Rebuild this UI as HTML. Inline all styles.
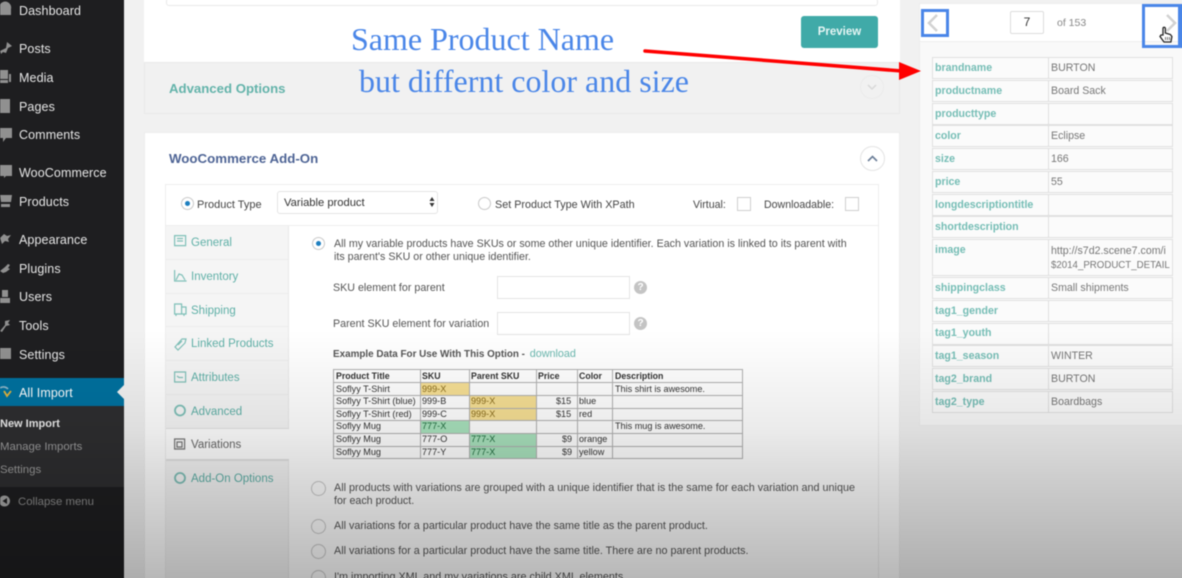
<!DOCTYPE html>
<html style="overflow:hidden"><head><meta charset="utf-8">
<style>
html,body{margin:0;padding:0;width:1182px;height:578px;overflow:hidden;background:#f1f1f1}
#o{position:relative;width:1182px;height:578px;overflow:hidden}
#p{position:relative;width:1182px;height:578px;font-family:"Liberation Sans",sans-serif;color:#555;filter:blur(.4px)}
.a,.t{position:absolute}
.t{white-space:nowrap;line-height:16px;height:16px}
.m{left:19px;color:#e6e6e6;font-size:12.5px;font-weight:400;letter-spacing:.1px}
.tab{left:191px;color:#5fb0a7;font-size:11.5px}
.tl{position:absolute;left:166px;width:122px;height:1px;background:#ececec}
.g{color:#555;font-size:10.7px}
.rr{position:absolute;left:932px;width:241px;background:#fbfbfb;border:1px solid #e0e0e0;box-sizing:border-box}
.rr:after{content:"";position:absolute;left:115px;top:0;bottom:0;width:1px;background:#e0e0e0}
.k{left:935px;color:#75bdb5;font-size:10.6px;font-weight:700}
.v{left:1051px;color:#777;font-size:10.6px}
.radio{position:absolute;width:13px;height:13px;border:1px solid #c9c9c9;border-radius:50%;background:#fff;box-sizing:border-box}
.radio.on:after{content:"";position:absolute;left:3px;top:3px;width:5px;height:5px;border-radius:50%;background:#1e7fc0}
.inp{position:absolute;left:497px;width:133px;height:23px;background:#fff;border:1px solid #e4e4e4;box-sizing:border-box}
.q{position:absolute;left:634px;width:13px;height:13px;border-radius:50%;background:#c4c4c4;color:#fff;font-size:10px;font-weight:700;text-align:center;line-height:13px}
.chk{position:absolute;top:197px;width:14px;height:14px;background:#fff;border:1px solid #cfcfcf;box-sizing:border-box}
.x{font-size:9.1px;color:#333;line-height:12px;height:12px}
.b{font-weight:700;font-size:8.8px}
</style></head><body><div id="o"><div id="p">

<div class="a" style="left:-6px;top:-6px;width:1194px;height:590px;background:#f1f1f1"></div>

<!-- sidebar -->
<div class="a" style="left:-6px;top:-6px;width:130px;height:590px;background:#1e1e20"></div>
<div class="a" style="left:-6px;top:378px;width:130px;height:28px;background:#00719f"></div>
<div class="a" style="left:-6px;top:406px;width:130px;height:81px;background:#2e2e30"></div>
<div class="a" style="left:117px;top:385px;width:0;height:0;border:7px solid transparent;border-left:0;border-right:7px solid #f1f1f1"></div>

<svg class="a" style="left:0;top:0" width="18" height="370" viewBox="0 0 18 370" fill="#909090">
<path d="M0 4.500a6 6 0 0 1 11 4.500v6H0z"/>
<path d="M0 51l6-3 1-6 5 4-4 2-2 5-3-1-2 2z"/>
<path d="M0 70h8v9H0zM9 74h2v8H9zM0 80h8v3H0z"/>
<path d="M0 99h10v14H0z"/>
<path d="M0 128h12v10H6l-3 4v-4H0z"/>
<path d="M0 165h12v11H6l-2 2v-2H0z"/>
<path d="M0 195h12l-1 7H1zM1 204h9v3H1z"/>
<path d="M0 238l4-4 3 2 4-1-3 4 1 3-4-1-3 3z"/>
<path d="M0 271l5-4 3-3 2 1-2 3 2 1-4 3-3 1z"/>
<path d="M0 298h10v5H0zM2 290h6v7H2z"/>
<path d="M0 331l5-6 0-4 5-1-2 3 2 2-4 1-4 6z"/>
<path d="M0 348h11v11H0z"/>
</svg>
<svg class="a" style="left:0;top:384px" width="14" height="16" viewBox="0 0 14 16"><path d="M0 4a6 6 0 0 1 8 1" stroke="#8fb7c9" stroke-width="1.6" fill="none"/><path d="M4 7l3 5 4-5" stroke="#e0b33c" stroke-width="1.8" fill="none"/></svg>
<svg class="a" style="left:0;top:495px" width="11" height="12" viewBox="0 0 11 12"><circle cx="4.500" cy="6" r="5.500" fill="#a5a5a5"/><path d="M7 3v6L2.500 6z" fill="#1e1e20"/></svg>

<div class="t m" style="top:3px">Dashboard</div>
<div class="t m" style="top:41px">Posts</div>
<div class="t m" style="top:70px">Media</div>
<div class="t m" style="top:99px">Pages</div>
<div class="t m" style="top:127px">Comments</div>
<div class="t m" style="top:165px">WooCommerce</div>
<div class="t m" style="top:194px">Products</div>
<div class="t m" style="top:232px">Appearance</div>
<div class="t m" style="top:261px">Plugins</div>
<div class="t m" style="top:289px">Users</div>
<div class="t m" style="top:318px">Tools</div>
<div class="t m" style="top:347px">Settings</div>
<div class="t m" style="top:385px;color:#fff">All Import</div>
<div class="t" style="left:0;top:416px;color:#eee;font-size:11px;font-weight:700">New Import</div>
<div class="t" style="left:0;top:439px;color:#9c9c9c;font-size:11.400px">Manage Imports</div>
<div class="t" style="left:0;top:462px;color:#9c9c9c;font-size:11.400px">Settings</div>
<div class="t" style="left:18px;top:494px;color:#8c8c8c;font-size:11.400px">Collapse menu</div>

<!-- top panel -->
<div class="a" style="left:144px;top:-6px;width:756px;height:68px;background:#fff"></div>
<div class="a" style="left:166px;top:-2px;width:712px;height:8px;background:#fff;border:1px solid #e9e9e9;box-sizing:border-box;border-radius:3px"></div>
<div class="a" style="left:801px;top:16px;width:77px;height:32px;background:#40aaa8;border-radius:3px"></div>
<div class="t" style="left:801px;top:24px;width:77px;text-align:center;color:#e6f5f4;font-size:11.500px;font-weight:700">Preview</div>
<div class="a" style="left:144px;top:62px;width:756px;height:52px;background:#f1f1f1;border:1px solid #e9e9e9;box-sizing:border-box"></div>
<div class="t" style="left:169px;top:81px;color:#63b3aa;font-size:13.200px;font-weight:700">Advanced Options</div>
<div class="a" style="left:860px;top:75px;width:24px;height:24px;border:1px solid #ebebeb;border-radius:50%;box-sizing:border-box"></div>
<svg class="a" style="left:866px;top:83px" width="12" height="8" viewBox="0 0 12 8"><path d="M2 2l4 4 4-4" stroke="#d8d8d8" stroke-width="1.500" fill="none"/></svg>

<!-- main panel -->
<div class="a" style="left:144px;top:132px;width:756px;height:452px;background:#fff;border:1px solid #ededed;box-sizing:border-box"></div>
<div class="t" style="left:169px;top:151px;color:#4e6495;font-size:13.300px;font-weight:700">WooCommerce Add-On</div>
<div class="a" style="left:860px;top:146px;width:25px;height:25px;border:1px solid #e4e4e4;border-radius:50%;box-sizing:border-box;background:#fff"></div>
<svg class="a" style="left:866px;top:154px" width="13" height="9" viewBox="0 0 13 9"><path d="M2 7l4.500-4.500L11 7" stroke="#6a7d97" stroke-width="1.600" fill="none"/></svg>

<div class="a" style="left:165px;top:184px;width:714px;height:400px;background:#fff;border:1px solid #eee;box-sizing:border-box"></div>
<div class="a" style="left:166px;top:225px;width:712px;height:1px;background:#eee"></div>
<div class="a" style="left:166px;top:226px;width:123px;height:358px;background:#f5f5f5;border-right:1px solid #e9e9e9;box-sizing:border-box"></div>
<div class="a" style="left:166px;top:428px;width:123px;height:33px;background:#fff;border-top:1px solid #e3e3e3;border-bottom:2px solid #e3e3e3;box-sizing:border-box"></div>

<div class="radio on" style="left:181px;top:197px"></div>
<div class="t" style="left:197px;top:197px;color:#444;font-size:11px">Product Type</div>
<div class="a" style="left:277px;top:191px;width:161px;height:23px;background:#fff;border:1px solid #e4e4e4;border-radius:3px;box-sizing:border-box"></div>
<div class="t" style="left:284px;top:195px;color:#333;font-size:11.200px">Variable product</div>
<svg class="a" style="left:429px;top:197px" width="6" height="10" viewBox="0 0 6 10"><path d="M3 0l2.500 4h-5zM3 10L.5 6h5z" fill="#333"/></svg>
<div class="radio" style="left:478px;top:197px"></div>
<div class="t" style="left:495px;top:197px;color:#444;font-size:10.800px">Set Product Type With XPath</div>
<div class="t" style="left:693px;top:197px;color:#444;font-size:10.600px">Virtual:</div>
<div class="chk" style="left:737px"></div>
<div class="t" style="left:764px;top:197px;color:#444;font-size:10.600px">Downloadable:</div>
<div class="chk" style="left:845px"></div>

<!-- tabs -->
<div class="tl" style="top:259px"></div><div class="tl" style="top:293px"></div><div class="tl" style="top:326px"></div><div class="tl" style="top:360px"></div><div class="tl" style="top:394px"></div>
<svg class="a" style="left:174px;top:235px" width="14" height="250" viewBox="0 0 14 250" fill="none" stroke="#7fc0b8" stroke-width="1.200">
<path d="M.6.6h11v10H.6zM3 3.500h6M3 6h6"/>
<path d="M.6 35v11h12M2 45l3-6 3 1 3 5"/>
<path d="M.6 69h7v10H.6zM8 72h4v7H8M2 79v2M10 79v2"/>
<path d="M1 112l7-8 4 0-1 4-7 7zM4 110l4-4"/>
<path d="M.6 137h11v10H.6zM3 141l2 1.500h4"/>
<circle cx="6" cy="175.500" r="5" stroke-width="1.800"/>
<path d="M.6 204h10v10H.6zM3 207h5v5H3z" stroke="#777"/>
<circle cx="6" cy="243" r="5" stroke-width="1.800"/>
</svg>
<div class="t tab" style="top:235px">General</div>
<div class="t tab" style="top:269px">Inventory</div>
<div class="t tab" style="top:303px">Shipping</div>
<div class="t tab" style="top:336px">Linked Products</div>
<div class="t tab" style="top:370px">Attributes</div>
<div class="t tab" style="top:404px">Advanced</div>
<div class="t tab" style="top:437px;color:#666">Variations</div>
<div class="t tab" style="top:471px">Add-On Options</div>

<!-- content -->
<div class="radio on" style="left:312px;top:237px"></div>
<div class="t g" style="left:334px;top:236px">All my variable products have SKUs or some other unique identifier. Each variation is linked to its parent with</div>
<div class="t g" style="left:334px;top:249px">its parent's SKU or other unique identifier.</div>
<div class="t g" style="left:333px;top:280px">SKU element for parent</div>
<div class="inp" style="top:276px"></div><div class="q" style="top:281px">?</div>
<div class="t g" style="left:333px;top:316px">Parent SKU element for variation</div>
<div class="inp" style="top:312px"></div><div class="q" style="top:317px">?</div>
<div class="t" style="left:333px;top:346px;color:#555;font-size:9.900px;font-weight:700">Example Data For Use With This Option - <span style="color:#6bb8af;font-weight:400;font-size:10.800px;margin-left:2px">download</span></div>

<!-- example table -->
<div class="a" style="left:333px;top:369px;width:410px;height:90px;background:#fff"></div>
<div class="a" style="left:420px;top:382px;width:49px;height:13px;background:#f6df94"></div>
<div class="a" style="left:469px;top:395px;width:67px;height:25px;background:#f6df94"></div>
<div class="a" style="left:420px;top:420px;width:49px;height:13px;background:#a9e2bd"></div>
<div class="a" style="left:469px;top:433px;width:67px;height:25px;background:#a9e2bd"></div>
<svg class="a" style="left:333px;top:369px" width="410" height="90" viewBox="0 0 410 90" fill="none" stroke="#b0b0b0" stroke-width="1"><path d="M.5.5h409v89H.5zM87.500 0v90M136.500 0v90M203.500 0v90M244.500 0v90M279.500 0v90M0 13.500h410M0 26.500h410M0 39.500h410M0 51.500h410M0 64.500h410M0 77.500h410"/></svg>
<div class="t x b" style="left:336px;top:370px">Product Title</div><div class="t x b" style="left:422px;top:370px">SKU</div><div class="t x b" style="left:471px;top:370px">Parent SKU</div><div class="t x b" style="left:538px;top:370px">Price</div><div class="t x b" style="left:579px;top:370px">Color</div><div class="t x b" style="left:615px;top:370px">Description</div>
<div class="t x" style="left:336px;top:383px">Soflyy T-Shirt</div><div class="t x" style="left:422px;top:383px;color:#8a6d1e">999-X</div><div class="t x" style="left:615px;top:383px">This shirt is awesome.</div>
<div class="t x" style="left:336px;top:395px">Soflyy T-Shirt (blue)</div><div class="t x" style="left:422px;top:395px">999-B</div><div class="t x" style="left:471px;top:395px;color:#8a6d1e">999-X</div><div class="t x" style="left:556px;top:395px">$15</div><div class="t x" style="left:579px;top:395px">blue</div>
<div class="t x" style="left:336px;top:408px">Soflyy T-Shirt (red)</div><div class="t x" style="left:422px;top:408px">999-C</div><div class="t x" style="left:471px;top:408px;color:#8a6d1e">999-X</div><div class="t x" style="left:556px;top:408px">$15</div><div class="t x" style="left:579px;top:408px">red</div>
<div class="t x" style="left:336px;top:420px">Soflyy Mug</div><div class="t x" style="left:422px;top:420px;color:#1f6b3e">777-X</div><div class="t x" style="left:615px;top:420px">This mug is awesome.</div>
<div class="t x" style="left:336px;top:433px">Soflyy Mug</div><div class="t x" style="left:422px;top:433px">777-O</div><div class="t x" style="left:471px;top:433px;color:#1f6b3e">777-X</div><div class="t x" style="left:562px;top:433px">$9</div><div class="t x" style="left:579px;top:433px">orange</div>
<div class="t x" style="left:336px;top:446px">Soflyy Mug</div><div class="t x" style="left:422px;top:446px">777-Y</div><div class="t x" style="left:471px;top:446px;color:#1f6b3e">777-X</div><div class="t x" style="left:562px;top:446px">$9</div><div class="t x" style="left:579px;top:446px">yellow</div>

<!-- options -->
<div class="radio" style="left:311px;top:481px;width:15px;height:15px"></div>
<div class="t g" style="left:334px;top:480px;font-size:10.800px">All products with variations are grouped with a unique identifier that is the same for each variation and unique</div>
<div class="t g" style="left:334px;top:493px">for each product.</div>
<div class="radio" style="left:311px;top:519px;width:15px;height:15px"></div>
<div class="t g" style="left:334px;top:518px;font-size:10.800px">All variations for a particular product have the same title as the parent product.</div>
<div class="radio" style="left:311px;top:544px;width:15px;height:15px"></div>
<div class="t g" style="left:334px;top:543px;font-size:10.800px">All variations for a particular product have the same title. There are no parent products.</div>
<div class="radio" style="left:311px;top:570px;width:15px;height:15px"></div>
<div class="t g" style="left:334px;top:569px;font-size:10.800px">I'm importing XML and my variations are child XML elements</div>

<!-- right panel -->
<div class="a" style="left:919px;top:3px;width:269px;height:423px;background:#f9f9f9;border:1px solid #ededed;box-sizing:border-box"></div>
<div class="a" style="left:920px;top:4px;width:268px;height:38px;background:#fff;border-bottom:1px solid #eee;box-sizing:border-box"></div>
<div class="a" style="left:1010px;top:11px;width:34px;height:23px;background:#fff;border:1px solid #ddd;border-radius:2px;box-sizing:border-box"></div>
<div class="t" style="left:1010px;top:14px;width:34px;text-align:center;color:#333;font-size:12px">7</div>
<div class="t" style="left:1057px;top:15px;color:#888;font-size:10.500px">of 153</div>
<div class="a" style="left:921px;top:9px;width:28px;height:28px;border:3px solid #4a86e8;box-sizing:border-box"></div>
<div class="a" style="left:1142px;top:4px;width:46px;height:44px;border:3px solid #4a86e8;border-right-width:10px;box-sizing:border-box"></div>
<svg class="a" style="left:926px;top:13px" width="14" height="20" viewBox="0 0 14 20"><path d="M11 2L3 10l8 8" stroke="#d2d2d2" stroke-width="2.500" fill="none"/></svg>
<svg class="a" style="left:1164px;top:13px" width="14" height="20" viewBox="0 0 14 20"><path d="M3 2l8 8-8 8" stroke="#d2d2d2" stroke-width="2.500" fill="none"/></svg>
<svg class="a" style="left:1159px;top:26px" width="14" height="18" viewBox="0 0 14 18"><path d="M4 9V2.500a1.200 1.200 0 0 1 2.400 0V7l5 1.500 1.500 2-1 5.500H5L1 10.500l1-1.500z" fill="#fff" stroke="#222" stroke-width="1.300"/><path d="M6.500 11v3M8.500 11v3M10.500 11v3" stroke="#555" stroke-width=".8"/></svg>

<div class="rr" style="top:57px;height:22px"></div>
<div class="rr" style="top:80px;height:22px"></div>
<div class="rr" style="top:103px;height:22px"></div>
<div class="rr" style="top:125px;height:22px"></div>
<div class="rr" style="top:148px;height:22px"></div>
<div class="rr" style="top:171px;height:22px"></div>
<div class="rr" style="top:194px;height:22px"></div>
<div class="rr" style="top:216px;height:22px"></div>
<div class="rr" style="top:239px;height:37px"></div>
<div class="rr" style="top:277px;height:22px"></div>
<div class="rr" style="top:300px;height:22px"></div>
<div class="rr" style="top:323px;height:22px"></div>
<div class="rr" style="top:345px;height:22px"></div>
<div class="rr" style="top:368px;height:22px"></div>
<div class="rr" style="top:391px;height:22px"></div>
<div class="t k" style="top:60px">brandname</div><div class="t v" style="top:60px">BURTON</div>
<div class="t k" style="top:83px">productname</div><div class="t v" style="top:83px">Board Sack</div>
<div class="t k" style="top:106px">producttype</div>
<div class="t k" style="top:128px">color</div><div class="t v" style="top:128px">Eclipse</div>
<div class="t k" style="top:151px">size</div><div class="t v" style="top:151px">166</div>
<div class="t k" style="top:174px">price</div><div class="t v" style="top:174px">55</div>
<div class="t k" style="top:197px">longdescriptiontitle</div>
<div class="t k" style="top:219px">shortdescription</div>
<div class="t k" style="top:242px">image</div><div class="t v" style="top:243px;width:119px;overflow:hidden">http://s7d2.scene7.com/i</div><div class="t v" style="top:258px;width:119px;overflow:hidden;font-size:9.700px">$2014_PRODUCT_DETAIL</div>
<div class="t k" style="top:280px">shippingclass</div><div class="t v" style="top:280px">Small shipments</div>
<div class="t k" style="top:303px">tag1_gender</div>
<div class="t k" style="top:325px">tag1_youth</div>
<div class="t k" style="top:348px">tag1_season</div><div class="t v" style="top:348px">WINTER</div>
<div class="t k" style="top:371px">tag2_brand</div><div class="t v" style="top:371px">BURTON</div>
<div class="t k" style="top:394px">tag2_type</div><div class="t v" style="top:394px">Boardbags</div>

<!-- video gradient overlay -->
<div class="a" style="left:-6px;top:330px;width:1194px;height:248px;background:linear-gradient(to bottom,rgba(0,0,0,0),rgba(0,0,0,.08) 40%,rgba(0,0,0,.15) 60%,rgba(0,0,0,.28))"></div>
<div class="a" style="left:-6px;top:578px;width:1194px;height:6px;background:rgba(0,0,0,.28)"></div>

<!-- annotations -->
<div class="t" style="left:351px;top:20px;height:38px;line-height:38px;font-family:'Liberation Serif',serif;font-size:32px;color:#4a86e8">Same Product Name</div>
<div class="t" style="left:359px;top:62px;height:38px;line-height:38px;font-family:'Liberation Serif',serif;font-size:32px;color:#4a86e8">but differnt color and size</div>
<svg class="a" style="left:640px;top:45px" width="290" height="40" viewBox="0 0 290 40"><path d="M5 6L262 26" stroke="#f00" stroke-width="3.500" stroke-linecap="round"/><path d="M259 17l22 9-22 9z" fill="#f00"/></svg>
</div></div></body></html>
